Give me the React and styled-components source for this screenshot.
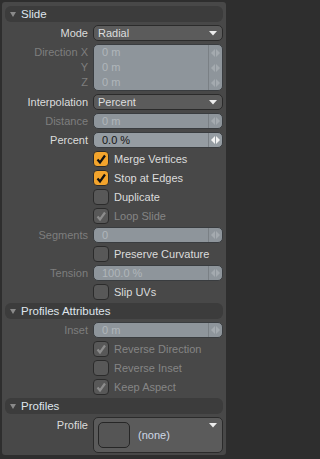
import styled, { createGlobalStyle } from "styled-components"

const GlobalStyle = createGlobalStyle`
  html, body {
    margin: 0;
    padding: 0;
    background: #2e2e2e;
  }
  body {
    font-family: "Liberation Sans", Arial, sans-serif;
    font-size: 11px;
  }
`

const Panel = styled.div`
  width: 224px;
  box-sizing: border-box;
  margin: 2px 3px 4px 2px;
  padding: 4px 3px 2px 3px;
  background: #484848;
  border-radius: 3px;
  display: flex;
  flex-direction: column;
  gap: 3px;
`

const Header = styled.div`
  height: 16px;
  border-radius: 6px;
  background: #3c3c3c;
  display: flex;
  align-items: center;
  padding-left: 5px;
  gap: 5px;
  color: #dfe5ec;
  font-size: 11.5px;
`

const Row = styled.div`
  display: grid;
  grid-template-columns: 83px 130px;
  column-gap: 5px;
  align-items: start;
`

const Label = styled.div`
  text-align: right;
  line-height: ${(p) => p.$lh || 16}px;
  white-space: nowrap;
  color: ${(p) => (p.$disabled ? "#7e7e7e" : "#dcdcdc")};
`

const LabelStack = styled.div`
  padding-top: 1px;
  display: flex;
  flex-direction: column;
`

const Dropdown = styled.div`
  height: 16px;
  box-sizing: border-box;
  border: 1px solid #2b2b2b;
  border-radius: 5px;
  background: #5b5b5b;
  color: #dedede;
  display: flex;
  align-items: center;
  justify-content: space-between;
  padding: 0 5px 0 4px;
`

const NumBox = styled.div`
  display: flex;
  box-sizing: border-box;
  height: ${(p) => p.$h || 16}px;
  border: 1px solid #393c3f;
  border-radius: 5px;
  background: ${(p) => (p.$disabled ? "#8e959b" : "#959ca2")};
  overflow: hidden;
`

const Values = styled.div`
  flex: 1;
  display: flex;
  flex-direction: column;
`

const Value = styled.div`
  height: ${(p) => p.$h || 14}px;
  line-height: ${(p) => p.$h || 14}px;
  padding-left: 8px;
  color: ${(p) => (p.$disabled ? "#b0b5ba" : "#151515")};
`

const Spinner = styled.div`
  width: 13px;
  border-left: 1px solid #7a8085;
  display: flex;
  flex-direction: column;
`

const SpinCell = styled.div`
  height: ${(p) => p.$h || 14}px;
  display: flex;
  align-items: center;
  justify-content: center;
`

const CheckLine = styled.div`
  display: flex;
  align-items: center;
  gap: 5px;
  height: 16px;
  color: ${(p) => (p.$disabled ? "#858585" : "#dcdcdc")};
`

const Box = styled.div`
  width: 16px;
  height: 16px;
  box-sizing: border-box;
  border: 1px solid #2b2b2b;
  border-radius: 4px;
  background: ${(p) => (p.$on ? "#f3a42c" : "#585858")};
  display: flex;
  align-items: center;
  justify-content: center;
`

const ProfileBox = styled.div`
  height: 36px;
  box-sizing: border-box;
  border: 1px solid #2b2b2b;
  border-radius: 5px;
  background: #5b5b5b;
  display: flex;
  align-items: center;
  padding: 0 5px 0 4px;
  position: relative;
`

const Swatch = styled.div`
  width: 32px;
  height: 26px;
  box-sizing: border-box;
  border: 1px solid #262626;
  border-radius: 5px;
  background: #555555;
`

const NoneText = styled.span`
  margin-left: 8px;
  color: #cfd8e6;
`

const CornerArrow = styled.div`
  position: absolute;
  top: 5px;
  right: 5px;
  display: flex;
`

const Tri = () => (
  <svg width="6" height="5" viewBox="0 0 6 5">
    <path d="M0 0 H6 L3 5 Z" fill="#8a8a8a" />
  </svg>
)

const DropArrow = () => (
  <svg width="8" height="5" viewBox="0 0 8 5">
    <path d="M0 0 H8 L4 4.5 Z" fill="#ececec" />
  </svg>
)

// left/right drag arrows of a number field
const SpinIcon = ({ disabled }) => {
  const c = disabled ? "#a4aaaf" : "#f2f2f2"
  return (
    <svg width="9" height="8" viewBox="0 0 9 8">
      <path d="M0 4 L4 0 L4 8 Z M9 4 L5 0 L5 8 Z" fill={c} />
    </svg>
  )
}

const Tick = ({ color }) => (
  <svg width="12" height="12" viewBox="0 0 12 12">
    <path d="M2.5 6.5 L5 9.5 L10 2.5" fill="none" stroke={color} strokeWidth="2.2" />
  </svg>
)

const SectionHeader = ({ title }) => (
  <Header>
    <Tri />
    <span>{title}</span>
  </Header>
)

const DropRow = ({ label, value }) => (
  <Row>
    <Label>{label}</Label>
    <Dropdown>
      <span>{value}</span>
      <DropArrow />
    </Dropdown>
  </Row>
)

const NumRow = ({ label, value, disabled }) => (
  <Row>
    <Label $disabled={disabled}>{label}</Label>
    <NumBox $disabled={disabled}>
      <Values>
        <Value $disabled={disabled}>{value}</Value>
      </Values>
      <Spinner>
        <SpinCell>
          <SpinIcon disabled={disabled} />
        </SpinCell>
      </Spinner>
    </NumBox>
  </Row>
)

const CheckRow = ({ label, on, disabled }) => (
  <Row>
    <span />
    <CheckLine $disabled={disabled}>
      <Box $on={on && !disabled}>
        {on && <Tick color={disabled ? "#8c8c8c" : "#111111"} />}
      </Box>
      <span>{label}</span>
    </CheckLine>
  </Row>
)

const axes = [
  { label: "Direction X", value: "0 m" },
  { label: "Y", value: "0 m" },
  { label: "Z", value: "0 m" },
]

const App = () => {
  return (
    <>
      <GlobalStyle />
      <Panel>
        <SectionHeader title="Slide" />
        <DropRow label="Mode" value="Radial" />
        <Row>
          <LabelStack>
            {axes.map((a) => (
              <Label key={a.label} $disabled $lh={15}>
                {a.label}
              </Label>
            ))}
          </LabelStack>
          <NumBox $disabled $h={47}>
            <Values>
              {axes.map((a) => (
                <Value key={a.label} $disabled $h={15}>
                  {a.value}
                </Value>
              ))}
            </Values>
            <Spinner>
              {axes.map((a) => (
                <SpinCell key={a.label} $h={15}>
                  <SpinIcon disabled />
                </SpinCell>
              ))}
            </Spinner>
          </NumBox>
        </Row>
        <DropRow label="Interpolation" value="Percent" />
        <NumRow label="Distance" value="0 m" disabled />
        <NumRow label="Percent" value="0.0 %" />
        <CheckRow label="Merge Vertices" on />
        <CheckRow label="Stop at Edges" on />
        <CheckRow label="Duplicate" />
        <CheckRow label="Loop Slide" on disabled />
        <NumRow label="Segments" value="0" disabled />
        <CheckRow label="Preserve Curvature" />
        <NumRow label="Tension" value="100.0 %" disabled />
        <CheckRow label="Slip UVs" />
        <SectionHeader title="Profiles Attributes" />
        <NumRow label="Inset" value="0 m" disabled />
        <CheckRow label="Reverse Direction" on disabled />
        <CheckRow label="Reverse Inset" disabled />
        <CheckRow label="Keep Aspect" on disabled />
        <SectionHeader title="Profiles" />
        <Row>
          <Label>Profile</Label>
          <ProfileBox>
            <Swatch />
            <NoneText>(none)</NoneText>
            <CornerArrow>
              <DropArrow />
            </CornerArrow>
          </ProfileBox>
        </Row>
      </Panel>
    </>
  )
}

export default App
